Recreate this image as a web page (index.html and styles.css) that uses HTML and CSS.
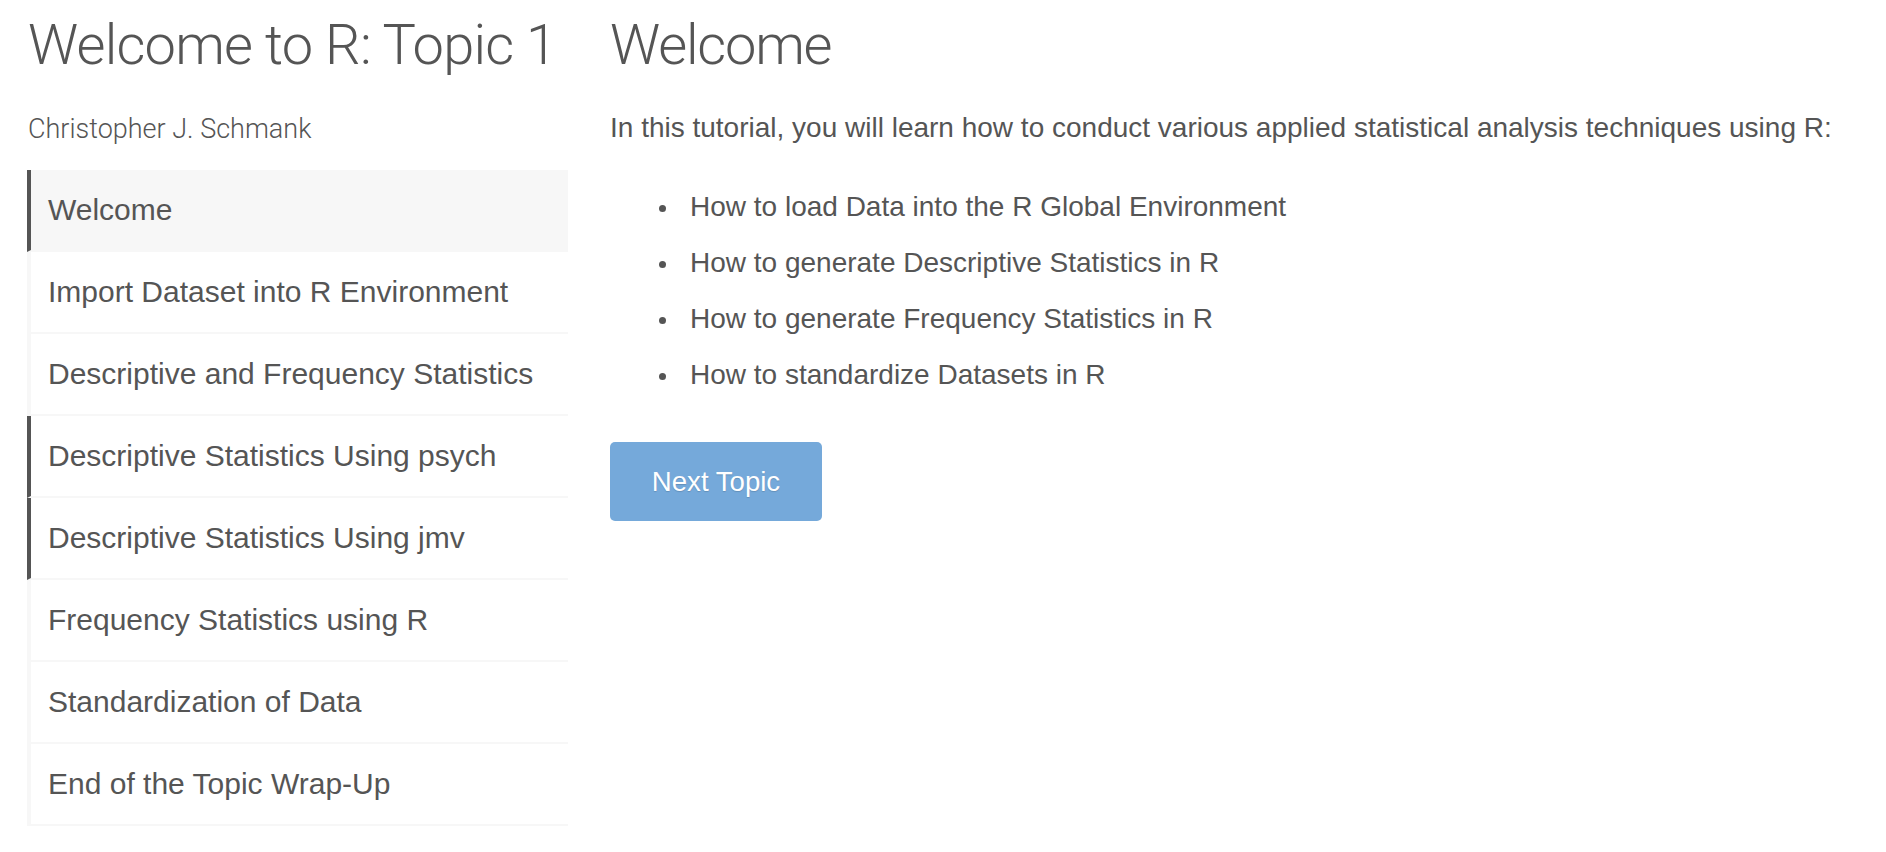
FILE: index.html
```html
<!DOCTYPE html>
<html lang="en">
<head>
<meta charset="utf-8">
<title>Welcome to R: Topic 1</title>
<link rel="stylesheet" href="styles.css">
</head>
<body>
<div class="page">
  <aside class="sidebar">
    <h1 class="title">Welcome to R: Topic 1</h1>
    <h4 class="author">Christopher J. Schmank</h4>
    <ul class="topics">
      <li class="topic current">Welcome</li>
      <li class="topic">Import Dataset into R Environment</li>
      <li class="topic">Descriptive and Frequency Statistics</li>
      <li class="topic done">Descriptive Statistics Using psych</li>
      <li class="topic done">Descriptive Statistics Using jmv</li>
      <li class="topic">Frequency Statistics using R</li>
      <li class="topic">Standardization of Data</li>
      <li class="topic">End of the Topic Wrap-Up</li>
    </ul>
  </aside>
  <main class="content">
    <h2 class="section-title">Welcome</h2>
    <p class="intro">In this tutorial, you will learn how to conduct various applied statistical analysis techniques using R:</p>
    <ul class="goals">
      <li>How to load Data into the R Global Environment</li>
      <li>How to generate Descriptive Statistics in R</li>
      <li>How to generate Frequency Statistics in R</li>
      <li>How to standardize Datasets in R</li>
    </ul>
    <button class="next-btn" type="button">Next Topic</button>
  </main>
</div>
</body>
</html>
```

FILE: styles.css
```css
html, body {
  margin: 0;
  padding: 0;
  background: #ffffff;
}

body {
  font-family: "Liberation Sans", Arial, sans-serif;
  color: #555555;
}

.page {
  display: flex;
  align-items: flex-start;
  padding-left: 27px;
}

.sidebar {
  width: 541px;
  flex: none;
}

.title {
  font-family: Roboto, sans-serif;
  font-weight: 300;
  font-size: 56px;
  line-height: 66px;
  margin: 12px 0 0 1px;
  color: #555555;
  white-space: nowrap;
  letter-spacing: -0.8px;
}

.author {
  font-family: Roboto, sans-serif;
  font-weight: 300;
  font-size: 27px;
  line-height: 30px;
  margin: 36px 0 0 1px;
  color: #555555;
}

.topics {
  list-style: none;
  margin: 26px 0 0 0;
  padding: 0;
}

.topic {
  height: 80px;
  display: flex;
  align-items: center;
  padding-left: 17px;
  border-left: 4px solid #f7f7f7;
  border-bottom: 2px solid #f7f7f7;
  font-size: 30px;
  color: #555555;
  white-space: nowrap;
}

.topic.current {
  background: #f7f7f7;
  border-left-color: #555555;
}

.topic.done {
  border-left-color: #555555;
}

.content {
  margin-left: 42px;
  flex: 1;
}

.section-title {
  font-family: Roboto, sans-serif;
  font-weight: 300;
  font-size: 56px;
  line-height: 66px;
  margin: 12px 0 0 0;
  color: #555555;
  letter-spacing: -1.2px;
}

.intro {
  font-size: 28px;
  line-height: 34px;
  margin: 33px 0 0 0;
  white-space: nowrap;
}

.goals {
  list-style: none;
  margin: 45px 0 0 0;
  padding-left: 80px;
  font-size: 28px;
  line-height: 34px;
}

.goals li {
  margin-bottom: 22px;
}

.goals li::before {
  content: "";
  display: inline-block;
  width: 7px;
  height: 7px;
  border-radius: 50%;
  background: #555555;
  margin-left: -31px;
  margin-right: 24px;
  vertical-align: middle;
}

.next-btn {
  display: block;
  margin-top: 50px;
  width: 212px;
  height: 79px;
  background: #75a9da;
  border: none;
  border-radius: 5px;
  color: #ffffff;
  font-family: "Liberation Sans", Arial, sans-serif;
  font-size: 27.6px;
  padding: 0;
  text-shadow: 0 1px 1px rgba(0, 0, 0, 0.15);
}
```
